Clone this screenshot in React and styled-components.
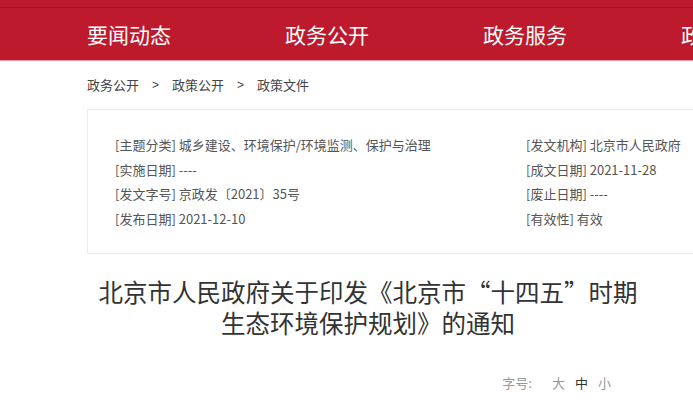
import React from "react";
import styled, { createGlobalStyle } from "styled-components";

const GlobalStyle = createGlobalStyle`
  html, body {
    margin: 0;
    padding: 0;
    background: #fff;
    overflow: hidden;
  }
  body {
    font-family: "Noto Sans CJK SC", "Noto Sans", sans-serif;
    color: #333;
  }
`;

const Header = styled.header`
  background-color: #bd1a2d;
  padding-top: 7px;
`;

const NavBar = styled.nav`
  display: flex;
  align-items: center;
  gap: 114px;
  height: 52px;
  padding-left: 87px;
  border-top: 1px solid #9f1424;
  border-bottom: 1px solid #e59aa3;
  white-space: nowrap;
  overflow: hidden;
`;

const NavItem = styled.a`
  color: #fff;
  font-size: 21px;
  line-height: 1;
  text-decoration: none;
  flex-shrink: 0;
`;

const Main = styled.main`
  padding-left: 87px;
  width: 640px;
`;

const Crumbs = styled.div`
  display: flex;
  align-items: center;
  height: 47px;
  padding-bottom: 1px;
  font-size: 13px;
  color: #444;
`;

const Sep = styled.span`
  margin: 0 13px;
  font-family: "Liberation Sans", sans-serif;
  font-size: 12px;
`;

const InfoBox = styled.div`
  display: grid;
  grid-template-columns: 411px 1fr;
  grid-auto-flow: column;
  grid-template-rows: repeat(4, 24.5px);
  border: 1px solid #eeeeee;
  padding: 23px 0 22px 27px;
  font-size: 13px;
  color: #555;
`;

const InfoRow = styled.div`
  line-height: 24.5px;
  white-space: nowrap;
`;

const Article = styled.div`
  width: 562px;
`;

const Title = styled.h1`
  margin: 22px 0 0;
  font-size: 24.5px;
  font-weight: normal;
  text-align: center;
  color: #333;
`;

const TitleLine = styled.span`
  display: block;
  height: 31px;
  line-height: 31px;
  white-space: nowrap;
`;

const SizeBar = styled.div`
  display: flex;
  justify-content: flex-end;
  align-items: center;
  gap: 10px;
  margin-top: 35px;
  padding-right: 38px;
  font-size: 13px;
  color: #999;
`;

const SizeLabel = styled.span`
  margin-right: 10px;
`;

const SizeOption = styled.span`
  color: ${(p) => (p.$active ? "#333" : "#999")};
  cursor: pointer;
`;

const leftInfo = [
  ["[主题分类]", "城乡建设、环境保护/环境监测、保护与治理"],
  ["[实施日期]", "----"],
  ["[发文字号]", "京政发〔2021〕35号"],
  ["[发布日期]", "2021-12-10"],
];

const rightInfo = [
  ["[发文机构]", "北京市人民政府"],
  ["[成文日期]", "2021-11-28"],
  ["[废止日期]", "----"],
  ["[有效性]", "有效"],
];

const App = () => {
  return (
    <>
      <GlobalStyle />
      <Header>
        <NavBar>
          <NavItem>要闻动态</NavItem>
          <NavItem>政务公开</NavItem>
          <NavItem>政务服务</NavItem>
          <NavItem>政民互动</NavItem>
        </NavBar>
      </Header>
      <Main>
        <Crumbs>
          <span>政务公开</span>
          <Sep>&gt;</Sep>
          <span>政策公开</span>
          <Sep>&gt;</Sep>
          <span>政策文件</span>
        </Crumbs>
        <InfoBox>
          {[...leftInfo, ...rightInfo].map(([k, v]) => (
            <InfoRow key={k}>
              {k} {v}
            </InfoRow>
          ))}
        </InfoBox>
        <Article>
          <Title>
            <TitleLine>北京市人民政府关于印发《北京市“十四五”时期</TitleLine>
            <TitleLine>生态环境保护规划》的通知</TitleLine>
          </Title>
          <SizeBar>
            <SizeLabel>字号:</SizeLabel>
            <SizeOption>大</SizeOption>
            <SizeOption $active>中</SizeOption>
            <SizeOption>小</SizeOption>
          </SizeBar>
        </Article>
      </Main>
    </>
  );
};

export default App;
